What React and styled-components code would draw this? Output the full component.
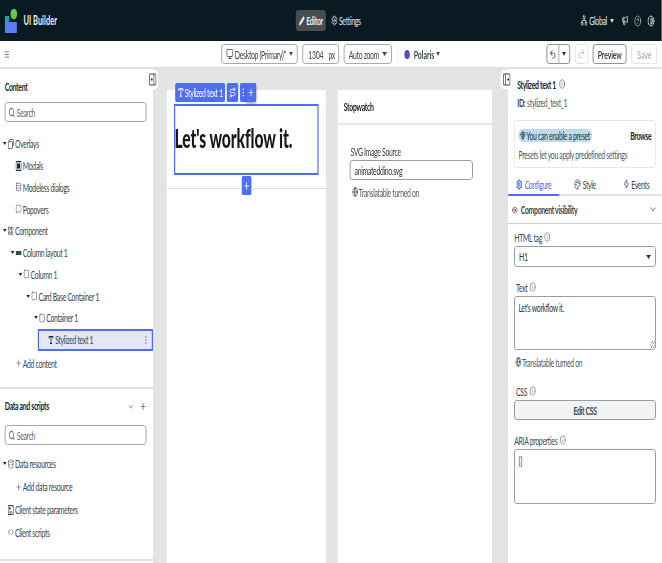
import styled, { createGlobalStyle } from "styled-components";
import {
  Search, Monitor, Pencil, Settings, Globe, Megaphone, CircleHelp, Contrast, Undo2, Redo2,
  Info, Plus, EllipsisVertical, Route, ChevronDown, Eye, Database, Code, Zap, Palette,
  MessageSquare, Gem, Network, Menu, Square, Type, Rows3, LayoutGrid,
} from "lucide-react";

/* The reference is a wide page squeezed sideways, so it is laid out at 1103px and scaled to 662px */
const GlobalStyle = createGlobalStyle`
  html, body {
    margin: 0;
    padding: 0;
    overflow: hidden;
    background: #fff;
  }
  * { box-sizing: border-box; }
`;

const Page = styled.div`
  width: 1103.4px;
  height: 563px;
  transform: scaleX(0.6);
  transform-origin: 0 0;
  display: flex;
  flex-direction: column;
  font-family: "Lato", "Noto Sans", sans-serif;
  font-size: 11.5px;
  letter-spacing: -0.55px;
  color: #20272c;
  overflow: hidden;
`;

const Header = styled.header`
  height: 41px;
  flex: none;
  background: #0a1a22;
  color: #e8ebed;
  display: flex;
  align-items: center;
  padding: 0 12px 0 8px;
`;
const HeaderSide = styled.div`
  flex: 1;
  display: flex;
  align-items: center;
  justify-content: ${({ $end }) => ($end ? "flex-end" : "flex-start")};
  gap: 10px;
`;
const Brand = styled.span`
  font-size: 12.5px;
  font-weight: 700;
  letter-spacing: 0;
`;
const HeaderNav = styled.nav`
  display: flex;
  align-items: center;
  gap: 4px;
`;
const NavTab = styled.div`
  height: 21px;
  display: flex;
  align-items: center;
  gap: 2px;
  padding: 0 5px;
  border-radius: 4px;
  font-weight: ${({ $active }) => ($active ? 700 : 400)};
  background: ${({ $active }) => ($active ? "#474c51" : "transparent")};
`;
const GlobalMenu = styled.div`
  display: flex;
  align-items: center;
  gap: 3px;
  margin-right: 3px;
`;
const Caret = styled.span`
  flex: none;
  width: 0;
  height: 0;
  border-left: ${({ $size = 3.5 }) => $size}px solid transparent;
  border-right: ${({ $size = 3.5 }) => $size}px solid transparent;
  border-top: ${({ $size = 3.5 }) => $size * 1.2}px solid currentColor;
  margin-left: ${({ $gap = 3 }) => $gap}px;
`;

const Toolbar = styled.div`
  height: 28px;
  flex: none;
  display: flex;
  align-items: center;
  padding: 0 8px 0 7px;
  border-bottom: 2px solid #dfe2e4;
`;
const ToolSide = styled.div`
  flex: 1;
  display: flex;
  align-items: center;
  justify-content: ${({ $end }) => ($end ? "flex-end" : "flex-start")};
  gap: 8px;
`;
const ToolCenter = styled.div`
  display: flex;
  align-items: center;
  gap: 8px;
`;
const ToolSelect = styled.div`
  height: 20px;
  padding: 0 7px;
  display: flex;
  align-items: center;
  gap: 2px;
  border: 1px solid #8e969c;
  border-radius: 4px;
  color: #3c454b;
  white-space: nowrap;
`;
const PxInput = styled(ToolSelect)`
  gap: 9px;
  padding: 0 6px 0 9px;
`;
const ToolDivider = styled.div`
  width: 1px;
  height: 18px;
  background: #e2e4e6;
  margin: 0 2px;
`;
const ThemeDot = styled.span`
  width: 9px;
  height: 9px;
  border-radius: 50%;
  background: #4c4fc4;
  margin-right: 7px;
`;
const ThemeName = styled.div`
  display: flex;
  align-items: center;
  font-weight: 700;
  letter-spacing: 0;
  color: #3c454b;
`;
const SplitButton = styled.div`
  height: 20px;
  width: 39px;
  display: grid;
  grid-template-columns: 1fr 1fr;
  border: 1px solid #6f787e;
  border-radius: 4px;
  align-items: center;
  justify-items: center;
  color: #20272c;
`;
const SplitPart = styled.div`
  width: 100%;
  height: 100%;
  display: flex;
  align-items: center;
  justify-content: center;
  & + & { border-left: 1px solid #6f787e; }
`;
const ActionButton = styled.div`
  height: 20px;
  padding: 0 ${({ $pad = 7 }) => $pad}px;
  display: flex;
  align-items: center;
  border: ${({ $disabled }) => ($disabled ? "1px solid #d9dcde" : "1.5px solid #6f787e")};
  border-radius: 4px;
  font-weight: 700;
  letter-spacing: -0.2px;
  color: ${({ $disabled }) => ($disabled ? "#b4b9bd" : "#3c454b")};
`;

const Workspace = styled.div`
  flex: 1;
  min-height: 0;
  display: flex;
`;

const LeftPanel = styled.aside`
  width: 255px;
  flex: none;
  position: relative;
  background: #fff;
`;
const PanelSection = styled.section`
  height: ${({ $h }) => $h}px;
  border-bottom: 2px solid #dfe2e4;
`;
const SectionHead = styled.div`
  height: ${({ $h }) => $h}px;
  padding: 0 9px 0 8px;
  display: flex;
  align-items: flex-end;
  justify-content: space-between;
  font-weight: 700;
  color: #20272c;
`;
const HeadTools = styled.div`
  display: flex;
  align-items: center;
  gap: 10px;
  margin-right: 2px;
  color: #59636a;
`;
const SearchBox = styled.div`
  height: 20px;
  margin: ${({ $top }) => $top}px 11px ${({ $bottom }) => $bottom}px 8px;
  padding: 0 5px;
  display: flex;
  align-items: center;
  gap: 3px;
  border: 1px solid #8e969c;
  border-radius: 4px;
  color: #5f686e;
`;
const Row = styled.div`
  height: ${({ $h = 21.75 }) => $h}px;
  display: flex;
  align-items: center;
  color: #3c454b;
  white-space: nowrap;
  padding-left: ${({ $level }) => 5 + 13 * $level}px;
`;
const SelectedRow = styled(Row)`
  margin-left: 63px;
  padding-left: 15px;
  padding-right: 5px;
  background: #e3e7f8;
  border: 2px solid #4f6ef0;
`;
const CaretSlot = styled.span`
  width: 8px;
  flex: none;
  display: flex;
  color: #20272c;
`;
const IconSlot = styled.span`
  width: 12px;
  flex: none;
  display: flex;
  align-items: center;
  color: ${({ $dark }) => ($dark ? "#20272c" : "#3c454b")};
`;
const RowEnd = styled.span`
  margin-left: auto;
  display: flex;
  color: #7a838a;
`;
const CollapseTab = styled.div`
  position: absolute;
  top: 1px;
  ${({ $side }) => ($side === "left" ? "right: -9px;" : "left: -13px;")}
  width: 20px;
  height: 19px;
  display: flex;
  align-items: center;
  justify-content: center;
  background: #fff;
  border-radius: 5px;
  color: #3c454b;
  z-index: 2;
`;

const Canvas = styled.main`
  width: 592px;
  flex: none;
  background: #e3e4e6;
  padding: 21px 27px 0 23px;
  display: flex;
  gap: 20px;
`;
const Stage = styled.div`
  width: 265px;
  flex: none;
  background: #fff;
`;
const StageCard = styled.div`
  height: 99px;
  padding: 14px 12px;
  position: relative;
  border-bottom: 1px solid #dfe2e4;
`;
const SelectionBox = styled.div`
  height: 71px;
  border: 2px solid #4f6ef0;
  padding-bottom: 4px;
  display: flex;
  align-items: center;
`;
const BigTitle = styled.h1`
  margin: 0 0 0 -1px;
  font-size: 26px;
  font-weight: 900;
  letter-spacing: -0.15px;
  color: #17191c;
  white-space: nowrap;
`;
const ChipBar = styled.div`
  position: absolute;
  top: -7px;
  left: 14px;
  display: flex;
  gap: 3px;
  color: #fff;
`;
const Chip = styled.div`
  height: 19px;
  padding: 0 4px;
  display: flex;
  align-items: center;
  gap: 1px;
  background: #4f6ef0;
  border-radius: 2px;
  color: #fff;
  white-space: nowrap;
`;
const DotsChip = styled(Chip)`
  width: 18px;
  padding: 0;
`;
const PlusChip = styled(Chip)`
  margin-left: -11px;
  padding: 0 3px;
  box-shadow: 0 2px 3px rgba(0, 0, 0, 0.3);
`;
const BottomPlus = styled(Chip)`
  position: absolute;
  left: 125px;
  bottom: -7px;
  padding: 0 2px;
`;
const Widget = styled.div`
  width: 257px;
  flex: none;
  background: #fff;
`;
const WidgetHead = styled.div`
  height: 35px;
  padding: 0 0 0 10px;
  display: flex;
  align-items: center;
  font-weight: 700;
  border-bottom: 2px solid #e8e9eb;
`;
const WidgetBody = styled.div`
  padding: 19px 32px 19px 20px;
`;
const Field = styled.div`
  margin-bottom: ${({ $mb = 0 }) => $mb}px;
`;
const FieldLabel = styled.div`
  height: 14px;
  margin-bottom: 2px;
  padding-left: ${({ $indent = 0 }) => $indent}px;
  display: flex;
  align-items: center;
  gap: 4px;
  color: #3c454b;
`;
const TextInput = styled.div`
  height: ${({ $h = 20 }) => $h}px;
  padding: 0 ${({ $pad = 7 }) => $pad}px;
  display: flex;
  align-items: center;
  justify-content: space-between;
  border: 1px solid #7d868c;
  border-radius: 4px;
  color: #2b3338;
`;
const TextArea = styled.div`
  height: ${({ $h }) => $h}px;
  padding: 4px 6px;
  border: 1px solid #7d868c;
  border-radius: 4px;
  color: #2b3338;
  position: relative;
`;
const Grip = styled.span`
  position: absolute;
  right: 1px;
  bottom: 1px;
  width: 7px;
  height: 7px;
  background: repeating-linear-gradient(135deg, transparent 0 2px, #7d868c 2px 3px);
`;
const Hint = styled.div`
  height: 14px;
  margin-top: ${({ $top = 5 }) => $top}px;
  padding-left: ${({ $indent = 0 }) => $indent}px;
  display: flex;
  align-items: center;
  gap: 1px;
  color: #525b61;
`;

const RightPanel = styled.aside`
  flex: 1;
  min-width: 0;
  position: relative;
  background: #fff;
`;
const Inspector = styled.div`
  padding: 8px 10px 0 15px;
`;
const InspectorTitle = styled.div`
  display: flex;
  align-items: center;
  gap: 5px;
  font-weight: 700;
  height: 14px;
`;
const InspectorId = styled.div`
  margin-top: 4px;
  height: 14px;
  display: flex;
  align-items: center;
  gap: 3px;
  color: #525b61;
  b { color: #3c454b; }
`;
const PresetCard = styled.div`
  margin: 11px 0 0 -5px;
  height: 48px;
  padding: 8px 7px 0 6px;
  border: 1px solid #e1e3e5;
  border-radius: 3px;
`;
const PresetTop = styled.div`
  display: flex;
  align-items: center;
  justify-content: space-between;
  font-weight: 700;
`;
const PresetPill = styled.span`
  height: 13px;
  padding: 0 4px 0 3px;
  display: flex;
  align-items: center;
  gap: 1px;
  border-radius: 7px;
  background: #b9dcf2;
  font-weight: 400;
  color: #2b3338;
`;
const PresetText = styled.div`
  margin-top: 6px;
  color: #525b61;
`;
const Tabs = styled.div`
  height: 28px;
  display: grid;
  grid-template-columns: 1fr 1fr 1fr;
  border-bottom: 2px solid #dfe2e4;
`;
const Tab = styled.div`
  margin-bottom: -2px;
  display: flex;
  align-items: center;
  justify-content: center;
  gap: 3px;
  padding-top: 6px;
  color: ${({ $active }) => ($active ? "#4f6ef0" : "#3c454b")};
  border-bottom: 2px solid ${({ $active }) => ($active ? "#4f6ef0" : "transparent")};
`;
const Accordion = styled.div`
  height: 28px;
  padding: 0 8px 0 6px;
  display: flex;
  align-items: center;
  gap: 5px;
  font-weight: 700;
  color: #3c454b;
  border-bottom: 1px solid #c9cdd0;
  svg:last-child { margin-left: auto; }
`;
const Form = styled.div`
  padding: 6px 10px 0;
`;
const EditButton = styled.div`
  height: 20px;
  display: flex;
  align-items: center;
  justify-content: center;
  background: #f1f3f4;
  border: 1px solid #7d868c;
  border-radius: 4px;
  font-weight: 700;
  color: #3c454b;
`;

const LogoMark = () => (
  <svg width="21" height="24" viewBox="0 0 21 24">
    <rect x="0" y="7" width="7" height="17" fill="#14a4b8" />
    <rect x="0" y="13" width="20" height="11" fill="#5a7df5" />
    <ellipse cx="15" cy="5" rx="5.5" ry="5.2" fill="#63c94a" />
  </svg>
);

const OverlayIcon = ({ size = 11 }) => (
  <svg width={size} height={size} viewBox="0 0 11 11" fill="none" stroke="currentColor" strokeWidth="1.1">
    <rect x="2.5" y="0.6" width="8" height="7" rx="1" />
    <rect x="0.6" y="3" width="8" height="7.4" rx="1" fill="#fff" />
  </svg>
);

const ModalIcon = ({ size = 10 }) => (
  <svg width={size} height={size} viewBox="0 0 10 10">
    <rect x="0.6" y="0.6" width="8.8" height="8.8" rx="1" fill="none" stroke="currentColor" strokeWidth="1.1" />
    <rect x="2.4" y="2.4" width="5.2" height="5.2" fill="currentColor" />
  </svg>
);

const ColumnsIcon = ({ size = 10 }) => (
  <svg width={size} height={size} viewBox="0 0 10 10" fill="currentColor">
    <rect x="0" y="3" width="10" height="4" />
  </svg>
);

const ParamsIcon = ({ size = 10 }) => (
  <svg width={size} height={size} viewBox="0 0 10 10">
    <rect x="0.6" y="0.6" width="8.8" height="8.8" rx="1" fill="none" stroke="currentColor" strokeWidth="1.1" />
    <rect x="2.2" y="2.4" width="2.6" height="2.2" fill="currentColor" />
    <path d="M2.2 7h5.6" stroke="currentColor" strokeWidth="1.1" />
  </svg>
);

const DockIcon = ({ flip }) => (
  <svg width="13" height="13" viewBox="0 0 13 13" fill="none" stroke="currentColor" strokeWidth="1.2">
    <rect x="1" y="1" width="11" height="11" rx="1.4" />
    <path d={flip ? "M8.5 1v11M3 6.5h3.5M5 4.8v3.4" : "M4.5 1v11M7 6.5h3.5M9 4.8v3.4"} />
  </svg>
);

const TreeRow = ({ level, open, icon: Icon, fill, h, children }) => (
  <Row $level={level} $h={h}>
    <CaretSlot>{open && <Caret $size={3} $gap={0} />}</CaretSlot>
    <IconSlot $dark={fill}>
      <Icon size={10} strokeWidth={1.6} />
    </IconSlot>
    {children}
  </Row>
);

const Tip = () => <Info size={10} strokeWidth={1.5} />;

function App() {
  return (
    <Page>
      <GlobalStyle />
      <Header>
        <HeaderSide>
          <LogoMark />
          <Brand>UI Builder</Brand>
        </HeaderSide>
        <HeaderNav>
          <NavTab $active>
            <Pencil size={10} fill="currentColor" />
            Editor
          </NavTab>
          <NavTab>
            <Settings size={11} />
            Settings
          </NavTab>
        </HeaderNav>
        <HeaderSide $end>
          <GlobalMenu>
            <Network size={11} />
            Global
            <Caret />
          </GlobalMenu>
          <Megaphone size={11} />
          <CircleHelp size={12} strokeWidth={1.5} />
          <Contrast size={12} />
        </HeaderSide>
      </Header>

      <Toolbar>
        <ToolSide>
          <Menu size={9} />
        </ToolSide>
        <ToolCenter>
          <ToolSelect>
            <Monitor size={12} />
            Desktop (Primary)*
            <Caret />
          </ToolSelect>
          <PxInput>
            <span>1304</span>
            <span>px</span>
          </PxInput>
          <ToolSelect>
            Auto zoom
            <Caret $size={4} />
          </ToolSelect>
          <ToolDivider />
          <ThemeName>
            <ThemeDot />
            Polaris
            <Caret />
          </ThemeName>
        </ToolCenter>
        <ToolSide $end>
          <SplitButton>
            <SplitPart>
              <Undo2 size={11} />
            </SplitPart>
            <SplitPart>
              <Caret $size={3.5} $gap={0} />
            </SplitPart>
          </SplitButton>
          <ActionButton $disabled $pad={4}>
            <Redo2 size={12} />
          </ActionButton>
          <ActionButton>Preview</ActionButton>
          <ActionButton $disabled $pad={9}>Save</ActionButton>
        </ToolSide>
      </Toolbar>

      <Workspace>
        <LeftPanel>
          <CollapseTab $side="left">
            <DockIcon flip />
          </CollapseTab>
          <PanelSection $h={320}>
            <SectionHead $h={24}>Content</SectionHead>
            <SearchBox $top={9} $bottom={11}>
              <Search size={11} strokeWidth={2.5} />
              Search
            </SearchBox>
            <TreeRow level={0} open icon={OverlayIcon}>Overlays</TreeRow>
            <TreeRow level={1} icon={ModalIcon} fill>Modals</TreeRow>
            <TreeRow level={1} icon={Rows3}>Modeless dialogs</TreeRow>
            <TreeRow level={1} icon={MessageSquare}>Popovers</TreeRow>
            <TreeRow level={0} open icon={LayoutGrid} fill>Component</TreeRow>
            <TreeRow level={1} open icon={ColumnsIcon}>Column layout 1</TreeRow>
            <TreeRow level={2} open icon={Square}>Column 1</TreeRow>
            <TreeRow level={3} open icon={Square}>Card Base Container 1</TreeRow>
            <TreeRow level={4} open icon={Square}>Container 1</TreeRow>
            <SelectedRow $level={0}>
              <IconSlot $dark>
                <Type size={10} strokeWidth={3} />
              </IconSlot>
              Stylized text 1
              <RowEnd>
                <EllipsisVertical size={10} />
              </RowEnd>
            </SelectedRow>
            <TreeRow level={1} icon={Plus} h={25}>Add content</TreeRow>
          </PanelSection>
          <PanelSection $h={172}>
            <SectionHead $h={23}>
              Data and scripts
              <HeadTools>
                <ChevronDown size={10} />
                <Plus size={11} />
              </HeadTools>
            </SectionHead>
            <SearchBox $top={13} $bottom={7}>
              <Search size={11} strokeWidth={2.5} />
              Search
            </SearchBox>
            <TreeRow level={0} open icon={Database} h={23}>Data resources</TreeRow>
            <TreeRow level={1} icon={Plus} h={23}>Add data resource</TreeRow>
            <TreeRow level={0} icon={ParamsIcon} h={23}>Client state parameters</TreeRow>
            <TreeRow level={0} icon={Code} h={22}>Client scripts</TreeRow>
          </PanelSection>
        </LeftPanel>

        <Canvas>
          <Stage>
            <StageCard>
              <ChipBar>
                <Chip>
                  <Type size={11} strokeWidth={3} />
                  Stylized text 1
                </Chip>
                <Chip>
                  <Route size={11} />
                </Chip>
                <DotsChip>
                  <EllipsisVertical size={11} />
                </DotsChip>
                <PlusChip>
                  <Plus size={11} />
                </PlusChip>
              </ChipBar>
              <SelectionBox>
                <BigTitle>Let's workflow it.</BigTitle>
              </SelectionBox>
              <BottomPlus>
                <Plus size={12} />
              </BottomPlus>
            </StageCard>
          </Stage>
          <Widget>
            <WidgetHead>Stopwatch</WidgetHead>
            <WidgetBody>
              <FieldLabel $indent={1}>SVG Image Source</FieldLabel>
              <TextInput>animateddino.svg</TextInput>
              <Hint $indent={4}>
                <Globe size={10} strokeWidth={2.5} />
                Translatable turned on
              </Hint>
            </WidgetBody>
          </Widget>
        </Canvas>

        <RightPanel>
          <CollapseTab $side="right">
            <DockIcon />
          </CollapseTab>
          <Inspector>
            <InspectorTitle>
              Stylized text 1
              <Tip />
            </InspectorTitle>
            <InspectorId>
              <b>ID:</b> stylized_text_1
            </InspectorId>
            <PresetCard>
              <PresetTop>
                <PresetPill>
                  <Gem size={9} />
                  You can enable a preset
                </PresetPill>
                Browse
              </PresetTop>
              <PresetText>Presets let you apply predefined settings</PresetText>
            </PresetCard>
          </Inspector>
          <Tabs>
            <Tab $active>
              <Settings size={11} strokeWidth={3} />
              Configure
            </Tab>
            <Tab>
              <Palette size={11} />
              Style
            </Tab>
            <Tab>
              <Zap size={10} />
              Events
            </Tab>
          </Tabs>
          <Accordion>
            <Eye size={10} />
            Component visibility
            <ChevronDown size={13} strokeWidth={1.5} />
          </Accordion>
          <Form>
            <Field $mb={13}>
              <FieldLabel>HTML tag <Tip /></FieldLabel>
              <TextInput $h={21}>
                H1
                <Caret $size={4} />
              </TextInput>
            </Field>
            <Field $mb={15}>
              <FieldLabel $indent={3}>Text <Tip /></FieldLabel>
              <TextArea $h={54}>
                Let's workflow it.
                <Grip />
              </TextArea>
              <Hint $top={5} $indent={2}>
                <Globe size={10} strokeWidth={2.5} />
                Translatable turned on
              </Hint>
            </Field>
            <Field $mb={13}>
              <FieldLabel $indent={3}>CSS <Tip /></FieldLabel>
              <EditButton>Edit CSS</EditButton>
            </Field>
            <Field>
              <FieldLabel>ARIA properties <Tip /></FieldLabel>
              <TextArea $h={55}>{"{}"}</TextArea>
            </Field>
          </Form>
        </RightPanel>
      </Workspace>
    </Page>
  );
}

export default App;
